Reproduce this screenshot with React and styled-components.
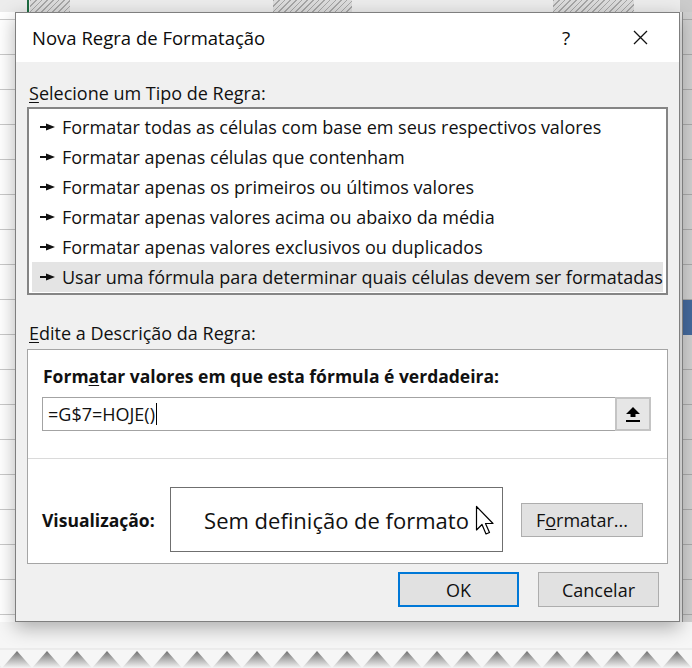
import React from "react";
import styled, { createGlobalStyle } from "styled-components";

const GlobalStyle = createGlobalStyle`
  html, body {
    margin: 0;
    padding: 0;
    background: #fff;
  }
  body {
    font-family: "Open Sans", "Noto Sans", "DejaVu Sans", sans-serif;
    color: #111;
  }
  * {
    box-sizing: border-box;
  }
`;

const ruleTypes = [
  "Formatar todas as células com base em seus respectivos valores",
  "Formatar apenas células que contenham",
  "Formatar apenas os primeiros ou últimos valores",
  "Formatar apenas valores acima ou abaixo da média",
  "Formatar apenas valores exclusivos ou duplicados",
  "Usar uma fórmula para determinar quais células devem ser formatadas",
];

const hatch = "repeating-linear-gradient(135deg, #a6a6a6 0 1px, #dcdcdc 1px 4px)";

const Page = styled.div`
  width: 692px;
  height: 668px;
  overflow: hidden;
  display: flex;
  flex-direction: column;
  background: #f6f6f6;
`;

const Sheet = styled.div`
  display: grid;
  grid-template-columns: 15px 665px 12px;
  grid-template-rows: 12px 610px 26px;
`;

const TopStrip = styled.div`
  grid-column: 1 / -1;
  background:
    linear-gradient(#1e6b41, #1e6b41) 27px 0 / 2px 100% no-repeat,
    ${hatch} 30px 0 / 40px 100% no-repeat,
    ${hatch} 273px 0 / 79px 100% no-repeat,
    ${hatch} 553px 0 / 81px 100% no-repeat,
    linear-gradient(#cbcbcb, #cbcbcb) 680px 0 / 12px 100% no-repeat,
    #ececec;
`;

const LeftEdge = styled.div`
  background: repeating-linear-gradient(
    to bottom,
    #fff 0 7px,
    #c9c9c9 7px 8px,
    #fff 8px 35px
  );
`;

const RightEdge = styled.div`
  background:
    linear-gradient(#44699c, #44699c) 3px 288px / 100% 35px no-repeat,
    repeating-linear-gradient(
        to bottom,
        #d0d0d0 0 7px,
        #a9a9a9 7px 8px,
        #d0d0d0 8px 35px
      )
      3px 0 / 100% 100% no-repeat,
    linear-gradient(to right, #ececec 0 2px, #8e8e8e 2px 3px);
`;

const BottomFade = styled.div`
  grid-column: 1 / -1;
  background: #f6f6f6;
`;

const Dialog = styled.div`
  grid-row: 2;
  grid-column: 2;
  position: relative;
  z-index: 1;
  display: flex;
  flex-direction: column;
  background: #f0f0f0;
  border: 1px solid #7f7f7f;
  box-shadow: 0 6px 18px rgba(0, 0, 0, 0.3);
`;

const TitleBar = styled.div`
  height: 49px;
  display: flex;
  align-items: center;
  gap: 28px;
  padding: 0 16px 0 16px;
  background: #fff;
`;

const Title = styled.div`
  flex: 1;
  font-size: 18.5px;
  color: #0c0c0c;
`;

const CaptionButton = styled.div`
  width: 46px;
  height: 49px;
  display: flex;
  align-items: center;
  justify-content: center;
  font-size: 19px;
  color: #0c0c0c;
`;

const Body = styled.div`
  flex: 1;
  display: flex;
  flex-direction: column;
  padding: 19px 11px 13px 11px;
`;

const SectionLabel = styled.div`
  line-height: 24px;
  font-size: 18px;
  padding-left: 2px;
  margin-top: ${(p) => p.$top || 0}px;
`;

const Key = styled.span`
  text-decoration: underline;
  text-underline-offset: 2px;
  text-decoration-thickness: 1px;
`;

const ListBox = styled.div`
  margin-top: 2px;
  border: 2px solid #858585;
  background: #fff;
  padding: 3px 3px 1px;
`;

const RuleRow = styled.div`
  height: 30px;
  display: flex;
  align-items: center;
  gap: 7px;
  padding-left: 8px;
  font-size: 18px;
  white-space: nowrap;
  overflow: hidden;
  background: ${(p) => (p.$selected ? "#e4e4e4" : "transparent")};
`;

const Panel = styled.div`
  margin-top: 4px;
  border: 1px solid #a5a5a5;
  background: #fff;
  display: flex;
  flex-direction: column;
`;

const PanelHead = styled.div`
  padding: 14px 16px 0 15px;
  line-height: 24px;
  font-size: 17.5px;
  font-weight: 700;
`;

const FormulaRow = styled.div`
  margin: 9px 16px 0 14px;
  height: 34px;
  display: flex;
`;

const FormulaInput = styled.div`
  flex: 1;
  display: flex;
  align-items: center;
  padding-left: 5px;
  border: 1px solid #a3a3a3;
  border-right: none;
  font-size: 18px;
`;

const Caret = styled.span`
  width: 1px;
  height: 22px;
  margin-left: 1px;
  background: #000;
`;

const CollapseButton = styled.div`
  width: 36px;
  display: flex;
  align-items: center;
  justify-content: center;
  background: #e6e6e6;
  border: 2px solid #c4c4c4;
`;

const Divider = styled.div`
  margin-top: 27px;
  height: 1px;
  background: #dadada;
`;

const PreviewRow = styled.div`
  margin: 28px 16px 11px 14px;
  height: 65px;
  display: flex;
  align-items: center;
`;

const PreviewLabel = styled.div`
  width: 128px;
  font-size: 17.5px;
  font-weight: 700;
`;

const PreviewBox = styled.div`
  position: relative;
  width: 333px;
  height: 65px;
  display: flex;
  align-items: center;
  justify-content: center;
  border: 1px solid #6f6f6f;
  font-size: 22px;
`;

const Pointer = styled.svg`
  position: absolute;
  left: 304px;
  top: 17px;
`;

const Button = styled.div`
  width: ${(p) => p.$width || 121}px;
  height: ${(p) => p.$height || 35}px;
  display: flex;
  align-items: center;
  justify-content: center;
  background: #e1e1e1;
  border: ${(p) => (p.$primary ? "2px solid #0078d7" : "1px solid #adadad")};
  font-size: 18px;
  margin-left: ${(p) => p.$offset || 0}px;
`;

const ButtonRow = styled.div`
  margin-top: 8px;
  display: flex;
  justify-content: flex-end;
  gap: 19px;
  padding-right: 9px;
`;

const Torn = styled.svg`
  display: block;
  flex: none;
`;

const RuleArrow = () => (
  <svg width="15" height="12" viewBox="0 0 15 12">
    <rect x="0" y="5" width="8" height="2" fill="#111" />
    <polygon points="6,2.5 15,6 6,9.5" fill="#111" />
  </svg>
);

const CloseGlyph = () => (
  <svg width="15" height="15" viewBox="0 0 15 15">
    <path d="M1 1 L14 14 M14 1 L1 14" stroke="#111" strokeWidth="1.3" />
  </svg>
);

const UploadGlyph = () => (
  <svg width="14" height="15" viewBox="0 0 14 15">
    <polygon points="7,0 14,7 9.5,7 9.5,10 4.5,10 4.5,7 0,7" fill="#000" />
    <rect x="0" y="13" width="14" height="2" fill="#000" />
  </svg>
);

const MousePointer = () => (
  <Pointer width="20" height="32" viewBox="0 0 20 32">
    <path
      d="M1.5 1.5 L1.5 25 L7 19.5 L11 29 L14.5 27.5 L10.5 18.5 L18 18.5 Z"
      fill="#fff"
      stroke="#000"
      strokeWidth="1.2"
      strokeLinejoin="round"
    />
  </Pointer>
);

// torn paper edge along the bottom of the sheet
const TornEdge = () => {
  const teeth = [];
  for (let x = -13; x < 700; x += 30) {
    teeth.push(`${x - 15},20 ${x},3 ${x + 15},20`);
  }
  return (
    <Torn width="692" height="20" viewBox="0 0 692 20">
      <defs>
        <linearGradient id="tooth" x1="0" y1="0" x2="0" y2="1">
          <stop offset="0" stopColor="#6e6e6e" />
          <stop offset="0.5" stopColor="#b4b4b4" />
          <stop offset="1" stopColor="#f4f4f4" />
        </linearGradient>
      </defs>
      <rect width="692" height="20" fill="#f6f6f6" />
      <rect y="0" width="692" height="2" fill="#ececec" />
      {teeth.map((pts) => (
        <polygon key={pts} points={pts} fill="url(#tooth)" />
      ))}
    </Torn>
  );
};

export default function App() {
  return (
    <>
      <GlobalStyle />
      <Page>
        <Sheet>
          <TopStrip />
          <LeftEdge />
          <Dialog>
            <TitleBar>
              <Title>Nova Regra de Formatação</Title>
              <CaptionButton>?</CaptionButton>
              <CaptionButton>
                <CloseGlyph />
              </CaptionButton>
            </TitleBar>
            <Body>
              <SectionLabel>
                <Key>S</Key>elecione um Tipo de Regra:
              </SectionLabel>
              <ListBox>
                {ruleTypes.map((rule, i) => (
                  <RuleRow key={rule} $selected={i === ruleTypes.length - 1}>
                    <RuleArrow />
                    {rule}
                  </RuleRow>
                ))}
              </ListBox>
              <SectionLabel $top={26}>
                <Key>E</Key>dite a Descrição da Regra:
              </SectionLabel>
              <Panel>
                <PanelHead>
                  Form<Key>a</Key>tar valores em que esta fórmula é verdadeira:
                </PanelHead>
                <FormulaRow>
                  <FormulaInput>
                    =G$7=HOJE()
                    <Caret />
                  </FormulaInput>
                  <CollapseButton>
                    <UploadGlyph />
                  </CollapseButton>
                </FormulaRow>
                <Divider />
                <PreviewRow>
                  <PreviewLabel>Visualização:</PreviewLabel>
                  <PreviewBox>
                    Sem definição de formato
                    <MousePointer />
                  </PreviewBox>
                  <Button $width={122} $height={34} $offset={18}>
                    F<Key>o</Key>rmatar...
                  </Button>
                </PreviewRow>
              </Panel>
              <ButtonRow>
                <Button $primary>OK</Button>
                <Button>Cancelar</Button>
              </ButtonRow>
            </Body>
          </Dialog>
          <RightEdge />
          <BottomFade />
        </Sheet>
        <TornEdge />
      </Page>
    </>
  );
}
